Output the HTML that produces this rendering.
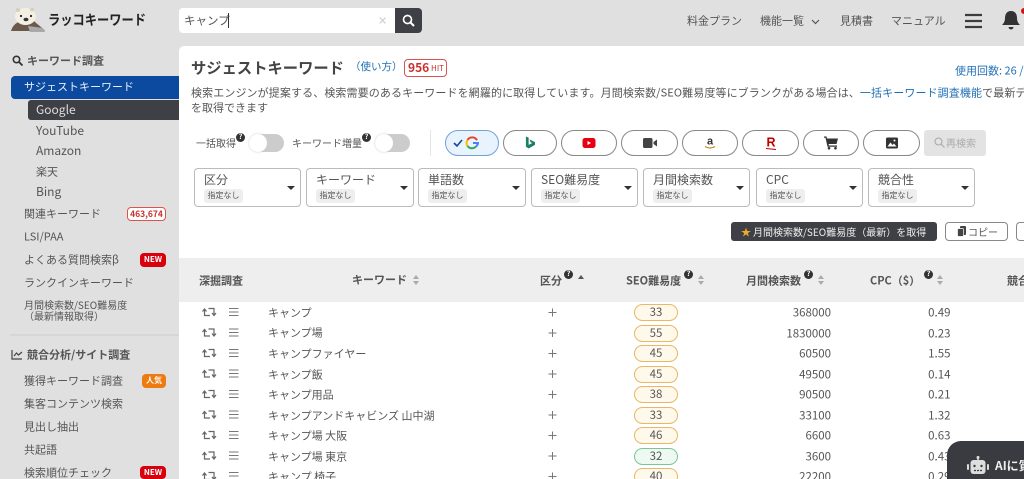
<!DOCTYPE html>
<html lang="ja"><head><meta charset="utf-8"><title>ラッコキーワード</title>
<style>
html,body{margin:0;padding:0;width:1024px;height:479px;overflow:hidden}
body{background:#e0e0e0;font-family:"Noto Sans CJK JP","Liberation Sans",sans-serif;color:#555;font-size:12px}
#w{position:absolute;left:0;top:0;width:1024px;height:479px;overflow:hidden}
.t{position:absolute;white-space:nowrap;line-height:1;transform:translateY(-50%)}
.a{position:absolute;box-sizing:border-box}
.panel{left:179px;top:46px;width:845px;height:433px;background:#fff;border-top-left-radius:5px}
.fil{top:168px;height:39px;background:#fff;border:1px solid #bbb;border-radius:4px}
.fil b{position:absolute;left:9px;top:5px;font-weight:400;font-size:12px;line-height:1;color:#555;white-space:nowrap}
.fil i{position:absolute;left:9px;top:20px;width:39px;height:14px;background:#eee;border-radius:3px;font-style:normal;font-size:8px;line-height:14px;text-align:center;color:#555}
.fil u{position:absolute;right:5px;top:17px;width:0;height:0;border:4px solid transparent;border-top:4px solid #333;border-bottom:0}
.pill{top:130px;height:26px;background:#fff;border:1px solid #888;border-radius:13px}
.pill svg{position:absolute;left:50%;top:50%;transform:translate(-50%,-50%)}
.lv{left:634px;width:44px;height:17px;border:1px solid #e9b765;background:#fff9ec;border-radius:9px;font-size:11.5px;line-height:15px;text-align:center;color:#555}
.lv.g{border-color:#7cc49a;background:#eef9f2}
.num{right:193px;font-size:11.5px}
.cpc{right:73.5px;font-size:11.5px}
.kw{left:268px;font-size:11px}
.side{left:24px;font-size:11px}
.q{position:absolute;width:9px;height:9px;border-radius:50%;background:#333;color:#fff;font-size:7px;font-weight:700;line-height:9px;text-align:center}
.sort{position:absolute;width:6px;height:10px}
.sort:before,.sort:after{content:"";position:absolute;left:0;border:3px solid transparent}
.sort:before{top:0;border-top:0;border-bottom:4px solid #aaa}
.sort:after{bottom:0;border-bottom:0;border-top:4px solid #aaa}
.h{font-size:11px;font-weight:700;color:#555}
.badge{position:absolute;border-radius:4px;text-align:center;font-weight:700;color:#fff}
</style></head><body><div id="w">

<!-- logo -->
<svg class="a" style="left:10px;top:7px" width="36" height="26" viewBox="0 0 36 26">
<path d="M1 24 C3 17 8 15 11 14 L24 14 C28 18 33 21 35 24 Z" fill="#6b5a4c"/>
<path d="M18 19 L33 21 L35 25 L20 25 Z" fill="#a9a9a9"/>
<ellipse cx="15.500" cy="9.500" rx="10.500" ry="8.500" fill="#f4efe3"/>
<circle cx="8" cy="3" r="2" fill="#d8cfbd"/><circle cx="22" cy="2.500" r="2" fill="#d8cfbd"/>
<circle cx="11" cy="9" r="1.100" fill="#222"/><circle cx="21" cy="9" r="1.100" fill="#222"/>
<ellipse cx="16" cy="12.500" rx="2.500" ry="1.700" fill="#333"/>
</svg>
<div class="t" style="left:48px;top:20px;font-size:14px;font-weight:700;color:#222;transform-origin:left center;transform:translateY(-50%) scaleX(.875)">ラッコキーワード</div>

<!-- search -->
<div class="a" style="left:179px;top:8px;width:217px;height:25px;background:#fff;border-radius:4px 0 0 4px"></div>
<div class="t" style="left:184px;top:21px;font-size:11.500px;color:#555">キャンプ</div>
<div class="a" style="left:228px;top:13px;width:1px;height:15px;background:#333"></div>
<div class="t" style="left:378px;top:21px;font-size:11px;color:#ccc">✕</div>
<div class="a" style="left:395px;top:8px;width:27px;height:25px;background:#3f4045;border-radius:0 4px 4px 0"></div>
<svg class="a" style="left:402px;top:14px" width="13" height="13" viewBox="0 0 13 13"><circle cx="5.500" cy="5.500" r="4" fill="none" stroke="#fff" stroke-width="1.700"/><path d="M8.500 8.500L12 12" stroke="#fff" stroke-width="2"/></svg>

<!-- top nav -->
<div class="t" style="left:687px;top:21px;font-size:11px">料金プラン</div>
<div class="t" style="left:760px;top:21px;font-size:11px">機能一覧</div>
<svg class="a" style="left:811px;top:19px" width="9" height="6" viewBox="0 0 9 6"><path d="M1 1l3.500 3.500L8 1" fill="none" stroke="#555" stroke-width="1.200"/></svg>
<div class="t" style="left:840px;top:21px;font-size:11px">見積書</div>
<div class="t" style="left:891px;top:21px;font-size:11px">マニュアル</div>
<svg class="a" style="left:965px;top:13px" width="17" height="16" viewBox="0 0 17 16"><path d="M0 2h17M0 8h17M0 14h17" stroke="#3c3c3c" stroke-width="2.200"/></svg>
<svg class="a" style="left:1002px;top:10px" width="18" height="21" viewBox="0 0 18 21"><path d="M9 1c-4 0-6 3-6 7 0 3-1 5-3 7h18c-2-2-3-4-3-7 0-4-2-7-6-7zM6.500 17a2.500 2.500 0 0 0 5 0z" fill="#333"/></svg>
<div class="a" style="left:1021px;top:8px;width:6px;height:6px;border-radius:50%;background:#d0121b"></div>

<!-- sidebar -->
<svg class="a" style="left:12px;top:55px" width="11" height="11" viewBox="0 0 11 11"><circle cx="4.500" cy="4.500" r="3.200" fill="none" stroke="#333" stroke-width="1.600"/><path d="M7 7l3.500 3.500" stroke="#333" stroke-width="1.800"/></svg>
<div class="t" style="left:27px;top:61px;font-size:11px;font-weight:700;color:#555">キーワード調査</div>
<div class="a" style="left:11px;top:76px;width:168px;height:23px;background:#0b4a9e;border-radius:4px 0 0 4px"></div>
<div class="t side" style="top:87px;color:#e8eef8">サジェストキーワード</div>
<div class="a" style="left:28px;top:100px;width:151px;height:20px;background:#3f4045;border-radius:3px 0 0 3px"></div>
<div class="t" style="left:36px;top:110px;font-size:12px;color:#ddd">Google</div>
<div class="t" style="left:36px;top:131px;font-size:12px">YouTube</div>
<div class="t" style="left:36px;top:151px;font-size:12px">Amazon</div>
<div class="t" style="left:36px;top:172px;font-size:11px">楽天</div>
<div class="t" style="left:36px;top:192px;font-size:12px">Bing</div>
<div class="t side" style="top:214px">関連キーワード</div>
<div class="badge" style="left:127px;top:207px;width:39px;height:14px;background:#fff;border:1px solid #d9534f;box-sizing:border-box;color:#c9302c;font-size:8.500px;line-height:12px">463,674</div>
<div class="t side" style="top:237px">LSI/PAA</div>
<div class="t side" style="top:260px">よくある質問検索β</div>
<div class="badge" style="left:140px;top:253px;width:26px;height:14px;background:#d8000c;font-size:8px;line-height:14px">NEW</div>
<div class="t side" style="top:283px">ランクインキーワード</div>
<div class="t" style="left:24px;top:305px;font-size:10px">月間検索数/SEO難易度</div>
<div class="t" style="left:24px;top:316px;font-size:10px">（最新情報取得）</div>
<div class="a" style="left:10px;top:334px;width:169px;height:2px;background:#d6d6d6"></div>
<svg class="a" style="left:11px;top:349px" width="12" height="11" viewBox="0 0 12 11"><path d="M1 1v9h10M3 7l2.500-3 2 2L11 3" fill="none" stroke="#444" stroke-width="1.200"/></svg>
<div class="t" style="left:27px;top:355px;font-size:11px;font-weight:700;color:#555">競合分析/サイト調査</div>
<div class="t side" style="top:381px">獲得キーワード調査</div>
<div class="badge" style="left:142px;top:374px;width:24px;height:14px;background:#ee7a12;font-size:8px;line-height:14px">人気</div>
<div class="t side" style="top:404px">集客コンテンツ検索</div>
<div class="t side" style="top:427px">見出し抽出</div>
<div class="t side" style="top:450px">共起語</div>
<div class="t side" style="top:473px">検索順位チェック</div>
<div class="badge" style="left:140px;top:466px;width:26px;height:13px;background:#d8000c;font-size:8px;line-height:14px">NEW</div>

<!-- panel -->
<div class="a panel"></div>
<div class="t" style="left:191px;top:68px;font-size:15.300px;font-weight:700;color:#444">サジェストキーワード</div>
<div class="t" style="left:350px;top:67px;font-size:10.500px;color:#1f6fb5">（使い方）</div>
<div class="a" style="left:404px;top:59px;width:43px;height:18px;border:1px solid #d9534f;border-radius:4px"></div>
<div class="t" style="left:408px;top:68px;font-size:12px;font-weight:700;color:#c9302c">956</div>
<div class="t" style="left:431px;top:69px;font-size:8px;color:#c9302c">HIT</div>
<div class="t" style="left:955px;top:71px;font-size:11px;color:#1f6fb5">使用回数: 26 / 100</div>
<div class="t" style="left:191px;top:93px;font-size:11px;letter-spacing:.11px">検索エンジンが提案する、検索需要のあるキーワードを網羅的に取得しています。月間検索数/SEO難易度等にブランクがある場合は、<span style="color:#1f6fb5">一括キーワード調査機能</span>で最新データを取得</div>
<div class="t" style="left:191px;top:108px;font-size:11px">を取得できます</div>

<!-- toggles -->
<div class="t" style="left:196px;top:143px;font-size:10px">一括取得</div>
<div class="q" style="left:236px;top:133px">?</div>
<div class="a" style="left:249px;top:134px;width:35px;height:18px;border-radius:9px;background:#ccc"></div>
<div class="a" style="left:249px;top:134px;width:18px;height:18px;border-radius:50%;background:#fff;box-shadow:0 0 2px #ccc"></div>
<div class="t" style="left:292px;top:143px;font-size:10px">キーワード増量</div>
<div class="q" style="left:362px;top:133px">?</div>
<div class="a" style="left:375px;top:134px;width:35px;height:18px;border-radius:9px;background:#ccc"></div>
<div class="a" style="left:375px;top:134px;width:18px;height:18px;border-radius:50%;background:#fff;box-shadow:0 0 2px #ccc"></div>
<div class="a" style="left:430px;top:130px;width:1px;height:26px;background:#e5e5e5"></div>

<!-- engine pills -->
<div class="a pill" style="left:445px;width:54px;background:#e9f3fd;border-color:#6fa4d8">
<svg style="left:calc(50% - 6px)" width="26" height="14" viewBox="0 0 26 14"><path d="M1 7l3 3 5-6" fill="none" stroke="#0b4a9e" stroke-width="1.600"/><path d="M24 4.200A5.500 5.500 0 0 0 14.500 4" fill="none" stroke="#ea4335" stroke-width="2"/><path d="M14.500 4a5.500 5.500 0 0 0 0 6" fill="none" stroke="#fbbc05" stroke-width="2"/><path d="M14.500 10a5.500 5.500 0 0 0 8.500 .5" fill="none" stroke="#34a853" stroke-width="2"/><path d="M23 10.500A5.500 5.500 0 0 0 25 7h-5" fill="none" stroke="#4285f4" stroke-width="2"/></svg></div>
<div class="a pill" style="left:503px;width:54px"><svg width="10" height="13" viewBox="0 0 11 14"><path d="M1 0l3 1v8l4-2-2-1-1-3 6 3v3l-7 4-3-2z" fill="#1c8068"/></svg></div>
<div class="a pill" style="left:561px;width:56px"><svg width="13" height="10" viewBox="0 0 13 10"><rect width="13" height="10" rx="2.500" fill="#e60012"/><path d="M5 3l3.500 2L5 7z" fill="#fff"/></svg></div>
<div class="a pill" style="left:621px;width:57px"><svg width="14" height="10" viewBox="0 0 14 10"><rect width="9.500" height="10" rx="1.500" fill="#444"/><path d="M10.500 4L14 1.500v7L10.500 6z" fill="#444"/></svg></div>
<div class="a pill" style="left:682px;width:56px"><svg width="12" height="15" viewBox="0 0 12 15"><text x="6" y="9" text-anchor="middle" font-size="11" font-weight="700" font-family="Liberation Sans" fill="#333">a</text><path d="M1 11c3 2 7 2 10 0" fill="none" stroke="#c78a2c" stroke-width="1.200"/></svg></div>
<div class="a pill" style="left:742px;width:57px"><svg width="12" height="15" viewBox="0 0 12 15"><text x="6" y="11" text-anchor="middle" font-size="12.500" font-weight="700" font-family="Liberation Sans" fill="#bf0000">R</text><path d="M1 13l10 1" stroke="#bf0000" stroke-width="1"/></svg></div>
<div class="a pill" style="left:803px;width:56px"><svg width="14" height="13" viewBox="0 0 14 13"><path d="M0 0h2.500l.5 2h11l-1.500 5.500H4.500L5 9h8v1.200H3.500L1.500 1.200H0z" fill="#333"/><circle cx="5" cy="11.700" r="1.300" fill="#333"/><circle cx="11.500" cy="11.700" r="1.300" fill="#333"/></svg></div>
<div class="a pill" style="left:863px;width:57px"><svg width="12" height="11" viewBox="0 0 12 11"><rect width="12" height="11" rx="1.500" fill="#333"/><path d="M1.500 9l3-4 2 2.500 1.500-1.500L10.500 9z" fill="#fff"/><circle cx="8.500" cy="3" r="1" fill="#fff"/></svg></div>
<div class="a" style="left:924px;top:130px;width:62px;height:26px;background:#e3e3e3;border-radius:3px"></div>
<svg class="a" style="left:934px;top:137px" width="11" height="11" viewBox="0 0 11 11"><circle cx="4.500" cy="4.500" r="3.500" fill="none" stroke="#aaa" stroke-width="1.100"/><path d="M7 7l3.500 3.500" stroke="#aaa" stroke-width="1.200"/></svg>
<div class="t" style="left:946px;top:143px;font-size:10px;color:#aaa">再検索</div>

<!-- filters -->
<div class="a fil" style="left:194px;width:107px"><b>区分</b><i>指定なし</i><u></u></div>
<div class="a fil" style="left:306px;width:108px"><b>キーワード</b><i>指定なし</i><u></u></div>
<div class="a fil" style="left:418px;width:108px"><b>単語数</b><i>指定なし</i><u></u></div>
<div class="a fil" style="left:531px;width:107px"><b>SEO難易度</b><i>指定なし</i><u></u></div>
<div class="a fil" style="left:643px;width:107px"><b>月間検索数</b><i>指定なし</i><u></u></div>
<div class="a fil" style="left:756px;width:107px"><b>CPC</b><i>指定なし</i><u></u></div>
<div class="a fil" style="left:868px;width:107px"><b>競合性</b><i>指定なし</i><u></u></div>

<!-- actions -->
<div class="a" style="left:731px;top:222px;width:206px;height:19px;background:#3f4045;border-radius:3px"></div>
<div class="t" style="left:741px;top:232px;font-size:10px;color:#f0a92e">★</div>
<div class="t" style="left:753px;top:232px;font-size:10px;color:#eee">月間検索数/SEO難易度（最新）を取得</div>
<div class="a" style="left:945px;top:222px;width:63px;height:19px;border:1px solid #888;border-radius:4px"></div>
<svg class="a" style="left:957px;top:226px" width="9" height="11" viewBox="0 0 9 11"><rect x="3" y="0" width="6" height="9" rx="1" fill="#444"/><rect x="0.500" y="2.500" width="6" height="8" rx="1" fill="#444" stroke="#fff" stroke-width=".7"/></svg>
<div class="t" style="left:968px;top:232px;font-size:10px">コピー</div>
<div class="a" style="left:1016px;top:222px;width:8px;height:19px;border:1px solid #888;border-right:0;border-radius:4px 0 0 4px"></div>

<!-- table header -->
<div class="a" style="left:179px;top:258px;width:845px;height:44px;background:#eee"></div>
<div class="t h" style="left:199px;top:281px">深掘調査</div>
<div class="t h" style="left:352px;top:280px">キーワード</div><div class="sort" style="left:413px;top:275px"></div>
<div class="t h" style="left:540px;top:281px">区分</div><div class="q" style="left:564px;top:270px">?</div>
<div class="a" style="left:578px;top:275px;width:0;height:0;border:3px solid transparent;border-top:0;border-bottom:4px solid #555"></div>
<div class="t h" style="left:626px;top:281px">SEO難易度</div><div class="q" style="left:684px;top:270px">?</div><div class="sort" style="left:698px;top:275px"></div>
<div class="t h" style="left:746px;top:281px">月間検索数</div><div class="q" style="left:804px;top:270px">?</div><div class="sort" style="left:818px;top:275px"></div>
<div class="t h" style="left:870px;top:281px">CPC（$）</div><div class="q" style="left:924px;top:270px">?</div><div class="sort" style="left:937px;top:275px"></div>
<div class="t h" style="left:1007px;top:281px">競合性</div>

<!-- rows -->
<svg class="a" style="left:179px;top:302px" width="70" height="177" viewBox="0 0 70 177">
<defs><g id="r"><path d="M25.500 7.500v6H31M23.500 9.500l2-2.500 2 2.500M29.500 6.500h5.500v6.500M33 11l2 2.500 2-2.500" fill="none" stroke="#666" stroke-width="1.200"/><path d="M50 6.500h9.500M50 10h9.500M50 13.500h9.500" stroke="#777" stroke-width="1.100"/></g></defs>
<use href="#r" y="0"/><use href="#r" y="20.500"/><use href="#r" y="41"/><use href="#r" y="61.500"/><use href="#r" y="82"/><use href="#r" y="102.500"/><use href="#r" y="123"/><use href="#r" y="143.500"/><use href="#r" y="164"/>
</svg>

<div class="t kw" style="top:313px">キャンプ</div>
<div class="t kw" style="top:333px">キャンプ場</div>
<div class="t kw" style="top:354px">キャンプファイヤー</div>
<div class="t kw" style="top:375px">キャンプ飯</div>
<div class="t kw" style="top:395px">キャンプ用品</div>
<div class="t kw" style="top:416px">キャンプアンドキャビンズ 山中湖</div>
<div class="t kw" style="top:436px">キャンプ場 大阪</div>
<div class="t kw" style="top:457px">キャンプ場 東京</div>
<div class="t kw" style="top:477px">キャンプ 椅子</div>

<svg class="a" style="left:547px;top:302px" width="11" height="177" viewBox="0 0 11 177"><path d="M1.500 10.500h8M5.500 6.500v8M1.500 31h8M5.500 27v8M1.500 51.500h8M5.500 47.500v8M1.500 72h8M5.500 68v8M1.500 92.500h8M5.500 88.500v8M1.500 113h8M5.500 109v8M1.500 133.500h8M5.500 129.500v8M1.500 154h8M5.500 150v8M1.500 174.500h8M5.500 170.500v8" stroke="#777" stroke-width="1"/></svg>

<div class="a lv" style="top:304px">33</div>
<div class="a lv" style="top:324.500px">55</div>
<div class="a lv" style="top:345px">45</div>
<div class="a lv" style="top:365.500px">45</div>
<div class="a lv" style="top:386px">38</div>
<div class="a lv" style="top:406.500px">33</div>
<div class="a lv" style="top:427px">46</div>
<div class="a lv g" style="top:447.500px">32</div>
<div class="a lv" style="top:468px">40</div>

<div class="t num" style="top:313px">368000</div>
<div class="t num" style="top:333.500px">1830000</div>
<div class="t num" style="top:354px">60500</div>
<div class="t num" style="top:374.500px">49500</div>
<div class="t num" style="top:395px">90500</div>
<div class="t num" style="top:415.500px">33100</div>
<div class="t num" style="top:436px">6600</div>
<div class="t num" style="top:456.500px">3600</div>
<div class="t num" style="top:477px">22200</div>

<div class="t cpc" style="top:313px">0.49</div>
<div class="t cpc" style="top:333.500px">0.23</div>
<div class="t cpc" style="top:354px">1.55</div>
<div class="t cpc" style="top:374.500px">0.14</div>
<div class="t cpc" style="top:395px">0.21</div>
<div class="t cpc" style="top:415.500px">1.32</div>
<div class="t cpc" style="top:436px">0.63</div>
<div class="t cpc" style="top:456.500px">0.43</div>
<div class="t cpc" style="top:477px">0.29</div>

<!-- AI chat -->
<div class="a" style="left:947px;top:441px;width:77px;height:38px;background:#3a3b40;border-radius:14px 0 0 0"></div>
<svg class="a" style="left:967px;top:456px" width="22" height="19" viewBox="0 0 22 19"><path d="M11 0v4" stroke="#ddd" stroke-width="1.500"/><circle cx="11" cy="1.500" r="1.500" fill="#ddd"/><rect x="3.500" y="4" width="15" height="14" rx="3" fill="#ddd"/><rect x="0" y="8" width="2" height="6" rx="1" fill="#ddd"/><rect x="20" y="8" width="2" height="6" rx="1" fill="#ddd"/><circle cx="7.500" cy="10" r="1.200" fill="#3a3b40"/><circle cx="14.500" cy="10" r="1.200" fill="#3a3b40"/><path d="M7 14.500h8" stroke="#3a3b40" stroke-width="1.300" stroke-dasharray="2 1"/></svg>
<div class="t" style="left:995px;top:466px;width:29px;overflow:hidden;font-size:12px;font-weight:700;color:#eee">AIに質問</div>
</div></body></html>
